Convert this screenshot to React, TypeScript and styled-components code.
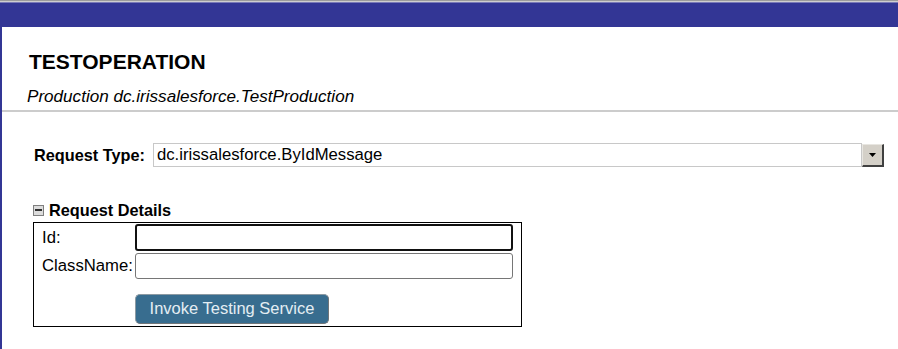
import React from "react";
import styled, { createGlobalStyle } from "styled-components";

const GlobalStyle = createGlobalStyle`
  html, body { margin: 0; padding: 0; background: #ffffff; }
  body { font-family: "Liberation Sans", Arial, sans-serif; color: #000; }
`;

const Page = styled.div`
  display: flex;
  flex-direction: column;
  min-height: 100vh;
`;

const TopBar = styled.div`
  height: 27px;
  background: linear-gradient(#9c9c9c 0 1px, #cfcfcf 1px 2px, #7a7ab8 2px 3px, #333695 3px);
`;

const Main = styled.div`
  flex: 1;
  border-left: 2px solid #333695;
  display: flex;
  flex-direction: column;
`;

const Header = styled.div`
  padding: 22px 0 0 25px;
  border-bottom: 2px solid #cccccc;
`;

const Title = styled.h1`
  margin: 0 0 13px 0;
  padding-left: 2px;
  font-size: 21px;
  line-height: 25px;
  font-weight: bold;
`;

const Subtitle = styled.div`
  font-style: italic;
  font-size: 17.1px;
  line-height: 20px;
  margin-bottom: 3px;
`;

const Body = styled.div`
  padding: 31px 0 0 31px;
  display: flex;
  flex-direction: column;
`;

const TypeRow = styled.div`
  display: flex;
  align-items: center;
  padding-left: 1px;
`;

const TypeLabel = styled.label`
  width: 119px;
  font-size: 16.3px;
  font-weight: bold;
`;

const SelectField = styled.div`
  width: 704px;
  height: 22px;
  border: 1px solid #c8c8c8;
  display: flex;
  align-items: center;
  padding-left: 3px;
  font-size: 16.7px;
  box-sizing: content-box;
`;

const DropButton = styled.div`
  width: 19px;
  height: 20px;
  background: #d4d0c8;
  border-top: 1px solid #e8e6e1;
  border-left: 1px solid #e8e6e1;
  border-right: 2px solid #404040;
  border-bottom: 2px solid #404040;
  display: flex;
  align-items: center;
  justify-content: center;
`;

const SectionHead = styled.div`
  margin-top: 34px;
  height: 18px;
  display: flex;
  align-items: center;
  gap: 5px;
  font-size: 16.3px;
  font-weight: bold;
`;

const ToggleIcon = styled.span`
  width: 9px;
  height: 9px;
  border: 1px solid #7f7f7f;
  background: #dcdcdc;
  display: inline-flex;
  align-items: center;
  justify-content: center;
  &::after {
    content: "";
    width: 7px;
    height: 2px;
    background: #303030;
  }
`;

const DetailsBox = styled.div`
  margin-top: 3px;
  width: 487px;
  border: 1px solid #000;
  padding: 1px 0 2px 0;
  display: grid;
  grid-template-columns: 101px 378px;
  row-gap: 2px;
  align-items: center;
`;

const FieldLabel = styled.label`
  padding-left: 8px;
  font-size: 16.7px;
`;

const TextInput = styled.input<{ $focused?: boolean }>`
  box-sizing: border-box;
  width: 378px;
  height: ${(p) => (p.$focused ? "27px" : "26px")};
  margin: 0;
  border: ${(p) => (p.$focused ? "2px solid #111" : "1px solid #767676")};
  border-radius: 3px;
  font-family: "Liberation Sans", Arial, sans-serif;
  font-size: 16px;
  outline: none;
  background: #fff;
`;

const ButtonCell = styled.div`
  grid-column: 2;
  margin-top: 13px;
`;

const InvokeButton = styled.button`
  box-sizing: border-box;
  width: 194px;
  height: 30px;
  background: #386d8f;
  color: #e4edf3;
  border: 1px solid #8c9aa3;
  border-right-color: #6f7579;
  border-bottom-color: #6f7579;
  border-radius: 5px;
  font-family: "Liberation Sans", Arial, sans-serif;
  font-size: 16.5px;
  padding: 0 0 2px 0;
  cursor: pointer;
`;

export default function App() {
  return (
    <>
      <GlobalStyle />
      <Page>
        <TopBar />
        <Main>
          <Header>
            <Title>TESTOPERATION</Title>
            <Subtitle>Production dc.irissalesforce.TestProduction</Subtitle>
          </Header>
          <Body>
            <TypeRow>
              <TypeLabel>Request Type:</TypeLabel>
              <SelectField>dc.irissalesforce.ByIdMessage</SelectField>
              <DropButton>
                <svg width="7" height="4" viewBox="0 0 7 4">
                  <polygon points="0,0 7,0 3.5,4" fill="#000" />
                </svg>
              </DropButton>
            </TypeRow>
            <SectionHead>
              <ToggleIcon />
              <span>Request Details</span>
            </SectionHead>
            <DetailsBox>
              <FieldLabel>Id:</FieldLabel>
              <TextInput $focused />
              <FieldLabel>ClassName:</FieldLabel>
              <TextInput />
              <ButtonCell>
                <InvokeButton>Invoke Testing Service</InvokeButton>
              </ButtonCell>
            </DetailsBox>
          </Body>
        </Main>
      </Page>
    </>
  );
}
